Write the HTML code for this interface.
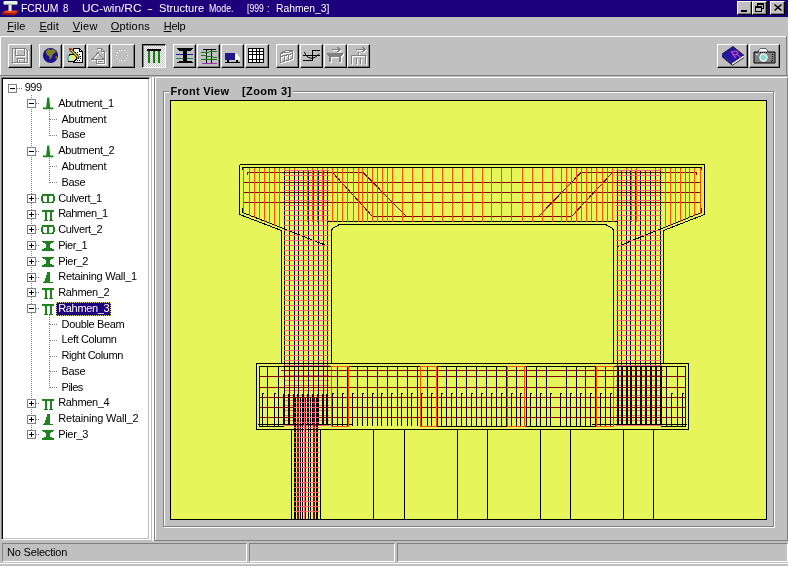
<!DOCTYPE html><html><head><meta charset="utf-8"><title>FCRUM 8</title><style>
*{box-sizing:border-box;margin:0;padding:0}
html,body{width:788px;height:566px;overflow:hidden;background:#c0c0c0;font-family:"Liberation Sans",sans-serif;font-size:11px;color:#000}
#w{position:absolute;left:0;top:0;width:788px;height:566px;overflow:hidden;background:#c0c0c0;will-change:transform}
.abs{position:absolute}
#title{position:absolute;left:0;top:0;width:788px;height:17px;background:#1c007c;color:#fff;font-size:11px;line-height:16px;white-space:pre}
#title span{position:absolute;top:0}
.cap{position:absolute;top:1px;width:15px;height:14px;background:#c0c0c0;border:1px solid;border-color:#fff #000 #000 #fff;box-shadow:inset -1px -1px 0 #808080}
#menu{position:absolute;left:0;top:17px;width:788px;height:19px;background:#c0c0c0;font-size:11px;line-height:18px}
#menu span{position:absolute;top:0}
#menu u{text-decoration:underline;text-underline-offset:1px}
.hl{position:absolute;height:1px;left:0;width:788px}
.tb{position:absolute;top:44px;width:24px;height:24px;background:#c0c0c0;border:1px solid;border-color:#fff #000 #000 #fff;box-shadow:inset -1px -1px 0 #808080}
.tbp{border-color:#000 #fff #fff #000;box-shadow:inset 1px 1px 0 #808080;background-color:#c0c0c0;background-image:linear-gradient(45deg,#fff 25%,transparent 25%,transparent 75%,#fff 75%),linear-gradient(45deg,#fff 25%,transparent 25%,transparent 75%,#fff 75%);background-size:2px 2px;background-position:0 0,1px 1px}
.tb svg{position:absolute;left:0;top:0}
#tree{position:absolute;left:1px;top:77px;width:150px;height:463px;background:#fff;border:1px solid;border-right-width:2px;border-color:#808080 #fff #fff #808080;box-shadow:inset 1px 1px 0 #000, inset -1px -1px 0 #c0c0c0}
.tr{position:absolute;white-space:pre;font-size:11px;line-height:13px;height:13px}
#main{position:absolute;left:154px;top:77px;width:634px;height:464px;background:#c0c0c0;border:1px solid;border-color:#fff #808080 #808080 #808080;box-shadow:inset 1px 0 0 #fff}
#gb{position:absolute;left:163px;top:91px;width:611px;height:436px;border:1px solid #808080;box-shadow:1px 1px 0 #fff, inset 1px 1px 0 #fff}
#gbl{position:absolute;left:169px;top:84px;height:14px;width:124px;background:#c0c0c0;font-weight:bold;font-size:11px;line-height:14px;white-space:pre;letter-spacing:0.1px}
#cv{position:absolute;left:170px;top:100px;width:597px;height:420px;background:#e6f55a;border:1px solid #000}
.sp{position:absolute;top:543px;height:19px;border:1px solid;border-color:#808080 #fff #fff #808080}
</style></head><body><div id="w">
<div id="title">
<span style="left:21px;transform-origin:0 0;transform:scaleX(0.939)">FCRUM </span>
<span style="left:63px;transform-origin:0 0;transform:scaleX(0.883)">8 </span>
<span style="left:81.5px;transform-origin:0 0;transform:scaleX(1.082)">UC-win/RC </span>
<span style="left:147px;transform-origin:0 0;transform:scaleX(1.638)">- </span>
<span style="left:158.8px;transform-origin:0 0;transform:scaleX(1.013)">Structure </span>
<span style="left:208.5px;transform-origin:0 0;transform:scaleX(0.801)">Mode. </span>
<span style="left:246.6px;transform-origin:0 0;transform:scaleX(0.780)">[999 </span>
<span style="left:267.4px;transform-origin:0 0;transform:scaleX(0.851)">: </span>
<span style="left:276px;transform-origin:0 0;transform:scaleX(0.939)">Rahmen_3] </span>
</div>
<svg class="abs" style="left:0;top:0" width="20" height="17" viewBox="0 0 20 17"><polygon points="2,12.500 6,10.500 18,10.500 14,13.500" fill="#f04818"/><polygon points="2,12.500 14,13.500 14,15.500 2,14.500" fill="#a01808"/><polygon points="14,13.500 18,10.500 18,12.500 14,15.500" fill="#c02808"/><rect x="8.500" y="4" width="3.500" height="7" fill="#e0f8e0"/><rect x="11" y="4" width="1" height="7" fill="#88a088"/><rect x="3.500" y="1" width="14" height="3.800" rx="1.200" fill="#e0f4e0"/><rect x="4" y="4" width="13" height="0.800" fill="#90a890"/></svg>
<div class="cap" style="left:737px"><svg width="13" height="12" class="abs" style="left:0;top:0"><rect x="3" y="8" width="6" height="2" fill="#000"/></svg></div>
<div class="cap" style="left:752px"><svg width="13" height="12" class="abs" style="left:0;top:0"><rect x="4.5" y="1.5" width="6" height="5" fill="none" stroke="#000"/><rect x="4" y="1" width="7" height="2" fill="#000"/><rect x="2.5" y="4.5" width="6" height="5" fill="#c0c0c0" stroke="#000"/><rect x="2" y="4" width="7" height="2" fill="#000"/></svg></div>
<div class="cap" style="left:770px"><svg width="13" height="12" class="abs" style="left:0;top:0"><path d="M3.5 2.5 L10.5 8.5 M10.5 2.5 L3.5 8.5" stroke="#000" stroke-width="1.6"/></svg></div>
<div id="menu">
<span style="left:7.2px;letter-spacing:0.14px"><u>F</u>ile</span>
<span style="left:39.4px;letter-spacing:0.11px"><u>E</u>dit</span>
<span style="left:72.8px;letter-spacing:0.34px"><u>V</u>iew</span>
<span style="left:110.8px;letter-spacing:0.16px"><u>O</u>ptions</span>
<span style="left:163.7px;letter-spacing:-0.21px"><u>H</u>elp</span>
</div>
<div class="hl" style="top:36px;background:#fff;width:787px"></div><div class="abs" style="left:786px;top:36px;width:1px;height:40px;background:#808080"></div><div class="abs" style="left:0;top:36px;width:1px;height:40px;background:#fff"></div>
<div class="hl" style="top:75px;background:#808080"></div>
<div class="tb" style="left:8px;width:24px"><svg width="24" height="24" viewBox="0 0 24 24" shape-rendering="crispEdges" style="left:-1px;top:-1px"><g transform="translate(1,1)" stroke="#fff" fill="none"><path d="M4.5 4.5h13l1.5 1.5v12.500h-14.5z"/><path d="M7.500 4.500v7h9v-7"/><path d="M9.500 18.500v-4h7v4"/><path d="M11.500 15.500v2"/></g><g stroke="#808080" fill="none"><path d="M4.5 4.5h13l1.5 1.5v12.500h-14.5z"/><path d="M7.500 4.500v7h9v-7"/><path d="M9.500 18.500v-4h7v4"/><path d="M11.500 15.500v2"/></g></svg></div>
<div class="tb" style="left:39px;width:23px"><svg width="23" height="24" viewBox="0 0 23 24" shape-rendering="crispEdges" style="left:-1px;top:-1px"><circle cx="11.5" cy="11.500" r="7.600" fill="#1c1090" shape-rendering="auto"/><path d="M7 7l3-2 2 1 2-1 3 2-1 2-2 1-1 3-2 3-1-4-2-1-1-2z" fill="#80801c" shape-rendering="auto"/><path d="M16 13l2-1 0 2-1 1z" fill="#80801c" shape-rendering="auto"/></svg></div>
<div class="tb" style="left:63px;width:23px"><svg width="23" height="24" viewBox="0 0 23 24" shape-rendering="crispEdges" style="left:-1px;top:-1px"><path d="M10.500 4.500h6l3 3v11h-9z" fill="#fff" stroke="#000"/><path d="M16.500 4.500v3h3" fill="none" stroke="#000"/><path d="M12 8.500h3M12 10.500h6M15 12.500h3M15 14.500h3M12 16.500h6" stroke="#000" stroke-dasharray="1 1"/><path d="M5.500 11.500l3-1.500h4l1 2v3l-2 2h-6z" fill="#e8e880" stroke="#000"/><rect x="4" y="11" width="2" height="6" fill="#40c0c0"/><path d="M7 5l9 9" stroke="#000" stroke-width="2.600" shape-rendering="auto"/><path d="M7.500 5.500l8 8" stroke="#e8e000" stroke-width="1.200" shape-rendering="auto"/><rect x="6" y="4" width="2" height="2" fill="#e03000"/></svg></div>
<div class="tb" style="left:87px;width:23px"><svg width="23" height="24" viewBox="0 0 23 24" shape-rendering="crispEdges" style="left:-1px;top:-1px"><g transform="translate(1,1)" stroke="#fff" fill="none"><path d="M9.500 4.500h5l3 3v11.500h-8v-3"/><path d="M14.500 4.500v3h3"/><path d="M11 8.500l-5.500 6.500h11z"/><path d="M10.500 17.500h5"/></g><g stroke="#808080" fill="none"><path d="M9.500 4.500h5l3 3v11.500h-8v-3"/><path d="M14.500 4.500v3h3"/><path d="M11 8.500l-5.500 6.500h11z"/><path d="M10.500 17.500h5"/></g></svg></div>
<div class="tb" style="left:111px;width:24px"><svg width="24" height="24" viewBox="0 0 24 24" shape-rendering="crispEdges" style="left:-1px;top:-1px"><rect x="16" y="11" width="1" height="1" fill="#fff"/><rect x="15" y="10" width="1" height="1" fill="#909090" opacity="0.35"/><rect x="15" y="14" width="1" height="1" fill="#fff"/><rect x="14" y="13" width="1" height="1" fill="#909090" opacity="0.35"/><rect x="13" y="16" width="1" height="1" fill="#fff"/><rect x="12" y="15" width="1" height="1" fill="#909090" opacity="0.35"/><rect x="10" y="16" width="1" height="1" fill="#fff"/><rect x="9" y="15" width="1" height="1" fill="#909090" opacity="0.35"/><rect x="8" y="16" width="1" height="1" fill="#fff"/><rect x="7" y="15" width="1" height="1" fill="#909090" opacity="0.35"/><rect x="6" y="14" width="1" height="1" fill="#fff"/><rect x="5" y="13" width="1" height="1" fill="#909090" opacity="0.35"/><rect x="5" y="11" width="1" height="1" fill="#fff"/><rect x="4" y="10" width="1" height="1" fill="#909090" opacity="0.35"/><rect x="6" y="8" width="1" height="1" fill="#fff"/><rect x="5" y="7" width="1" height="1" fill="#909090" opacity="0.35"/><rect x="8" y="6" width="1" height="1" fill="#fff"/><rect x="7" y="5" width="1" height="1" fill="#909090" opacity="0.35"/><rect x="10" y="6" width="1" height="1" fill="#fff"/><rect x="9" y="5" width="1" height="1" fill="#909090" opacity="0.35"/><rect x="13" y="6" width="1" height="1" fill="#fff"/><rect x="12" y="5" width="1" height="1" fill="#909090" opacity="0.35"/><rect x="15" y="8" width="1" height="1" fill="#fff"/><rect x="14" y="7" width="1" height="1" fill="#909090" opacity="0.35"/></svg></div>
<div class="tb tbp" style="left:142px;width:24px"><svg width="24" height="24" viewBox="0 0 24 24" shape-rendering="crispEdges" style="left:-1px;top:-1px"><rect x="5" y="5" width="14" height="2" fill="#000"/><rect x="6" y="7" width="2" height="12" fill="#108010"/><rect x="11" y="7" width="2" height="12" fill="#108010"/><rect x="16" y="7" width="2" height="12" fill="#108010"/></svg></div>
<div class="tb" style="left:173px;width:23px"><svg width="23" height="24" viewBox="0 0 23 24" shape-rendering="crispEdges" style="left:-1px;top:-1px"><g transform="translate(-1,0)"><path d="M5 4h16v1l-3 2h-10l-3-2z" fill="#000"/><rect x="11" y="5" width="4" height="13" fill="#000"/><path d="M5 19h16v-1l-3-1h-10l-3 1z" fill="#000"/><rect x="4" y="10" width="7" height="1" fill="#2018a0"/><rect x="15" y="10" width="6" height="1" fill="#2018a0"/><rect x="4" y="14" width="7" height="1" fill="#108070"/><rect x="15" y="14" width="6" height="1" fill="#108070"/></g></svg></div>
<div class="tb" style="left:197px;width:23px"><svg width="23" height="24" viewBox="0 0 23 24" shape-rendering="crispEdges" style="left:-1px;top:-1px"><rect x="6" y="5" width="13" height="1" fill="#000"/><rect x="9" y="5" width="1" height="14" fill="#000"/><rect x="14" y="5" width="1" height="14" fill="#000"/><path d="M4 8.500h7l2-1h7M4 11.500h4l2 1h5l2 1h3M4 15.500h16" stroke="#108010" fill="none" shape-rendering="auto"/><rect x="5" y="19" width="15" height="1" fill="#a030b0"/></svg></div>
<div class="tb" style="left:221px;width:23px"><svg width="23" height="24" viewBox="0 0 23 24" shape-rendering="crispEdges" style="left:-1px;top:-1px"><rect x="4" y="9" width="10" height="7" fill="#201890"/><path d="M14 10h2.500l2 3v3h-4.500z" fill="#fff"/><rect x="4" y="18" width="15" height="1" fill="#000"/><rect x="6" y="16" width="2" height="2" fill="#000"/><rect x="15" y="16" width="2" height="2" fill="#000"/></svg></div>
<div class="tb" style="left:245px;width:24px"><svg width="24" height="24" viewBox="0 0 24 24" shape-rendering="crispEdges" style="left:-1px;top:-1px"><rect x="3" y="4" width="16" height="15" fill="#000"/><rect x="4.0" y="5.0" width="2.8" height="2" fill="#fff"/><rect x="7.8" y="5.0" width="2.8" height="2" fill="#fff"/><rect x="11.6" y="5.0" width="2.8" height="2" fill="#fff"/><rect x="15.399999999999999" y="5.0" width="2.8" height="2" fill="#fff"/><rect x="4.0" y="7.8" width="2.8" height="2" fill="#fff"/><rect x="7.8" y="7.8" width="2.8" height="2" fill="#fff"/><rect x="11.6" y="7.8" width="2.8" height="2" fill="#fff"/><rect x="15.399999999999999" y="7.8" width="2.8" height="2" fill="#fff"/><rect x="4.0" y="10.6" width="2.8" height="2" fill="#fff"/><rect x="7.8" y="10.6" width="2.8" height="2" fill="#fff"/><rect x="11.6" y="10.6" width="2.8" height="2" fill="#fff"/><rect x="15.399999999999999" y="10.6" width="2.8" height="2" fill="#fff"/><rect x="4.0" y="13.399999999999999" width="2.8" height="2" fill="#fff"/><rect x="7.8" y="13.399999999999999" width="2.8" height="2" fill="#fff"/><rect x="11.6" y="13.399999999999999" width="2.8" height="2" fill="#fff"/><rect x="15.399999999999999" y="13.399999999999999" width="2.8" height="2" fill="#fff"/><rect x="4.0" y="16.2" width="2.8" height="2" fill="#fff"/><rect x="7.8" y="16.2" width="2.8" height="2" fill="#fff"/><rect x="11.6" y="16.2" width="2.8" height="2" fill="#fff"/><rect x="15.399999999999999" y="16.2" width="2.8" height="2" fill="#fff"/></svg></div>
<div class="tb" style="left:276px;width:23px"><svg width="23" height="24" viewBox="0 0 23 24" shape-rendering="crispEdges" style="left:-1px;top:-1px"><g transform="translate(1,1)" stroke="#fff" fill="none"><path d="M4.500 9.500c3-3 9-4 13-3M4.500 9.500v9l12-4v-7.500M4.500 12.500l12-3M8.500 11.500v6M12.500 10.500v6M16.500 7.500l-12 2"/></g><g stroke="#808080" fill="none"><path d="M4.500 9.500c3-3 9-4 13-3M4.500 9.500v9l12-4v-7.500M4.500 12.500l12-3M8.500 11.500v6M12.500 10.500v6M16.500 7.500l-12 2"/></g></svg></div>
<div class="tb" style="left:300px;width:23px"><svg width="23" height="24" viewBox="0 0 23 24" shape-rendering="crispEdges" style="left:-1px;top:-1px"><path d="M3 11.500h17M12.500 6v11M12.500 6.500h7M3 16.500h10" stroke="#000" fill="none"/><path d="M4.500 8c2 7.500 10 8.500 14.500 1.500" stroke="#000" fill="none" shape-rendering="auto"/></svg></div>
<div class="tb" style="left:324px;width:23px"><svg width="23" height="24" viewBox="0 0 23 24" shape-rendering="crispEdges" style="left:-1px;top:-1px"><g transform="translate(1,1)"><path d="M3 9h16v2l-2 1v6h-2v-5h-8v5h-2v-6l-2-1z" fill="#fff"/></g><path d="M3 9h16v2l-2 1v6h-2v-5h-8v5h-2v-6l-2-1z" fill="#808080"/><g transform="translate(1,1)" stroke="#fff" fill="none"><path d="M8 5.500h8M13.500 3l2.500 2.500-2.500 2.500"/></g><g stroke="#808080" fill="none"><path d="M8 5.500h8M13.500 3l2.500 2.500-2.500 2.500"/></g></svg></div>
<div class="tb" style="left:347px;width:23px"><svg width="23" height="24" viewBox="0 0 23 24" shape-rendering="crispEdges" style="left:-1px;top:-1px"><g transform="translate(1,1)" stroke="#fff" fill="none"><path d="M9 5.500h9M15.500 3l2.500 2.500-2.500 2.500M4.500 20v-9h14v9M9.500 20v-6M13.500 20v-6M11.500 11v-3"/></g><g stroke="#808080" fill="none"><path d="M9 5.500h9M15.500 3l2.500 2.500-2.500 2.500M4.500 20v-9h14v9M9.500 20v-6M13.500 20v-6M11.500 11v-3"/></g></svg></div>
<div class="tb" style="left:717px;width:31px"><svg width="31" height="24" viewBox="0 0 31 24" shape-rendering="crispEdges" style="left:-1px;top:-1px"><path d="M5 10l11-7.500 11 9-12 8z" fill="#2418a0" shape-rendering="auto"/><path d="M5 10v3l10 8.500v-2z" fill="#181070" shape-rendering="auto"/><path d="M15 19.500l12-8v2l-12 8z" fill="#fff" shape-rendering="auto"/><path d="M15 21.500l12-8" stroke="#000" stroke-width="0.8" shape-rendering="auto"/><path d="M5 10l11-7.500 11 9" stroke="#000" stroke-width="0.7" fill="none" shape-rendering="auto"/><text x="11" y="15" font-family="Liberation Sans,sans-serif" font-size="11" font-weight="bold" fill="#c040c0" transform="rotate(-12 14 12) skewX(20)">R</text></svg></div>
<div class="tb" style="left:749px;width:31px"><svg width="31" height="24" viewBox="0 0 31 24" shape-rendering="crispEdges" style="left:-1px;top:-1px"><path d="M5 8h4l2-3h6l2 3h7v11h-21z" fill="#808080" stroke="#000" stroke-width="1" shape-rendering="auto"/><path d="M11 5h6l1.500 2.500h-9z" fill="#fff" shape-rendering="auto"/><circle cx="14.5" cy="13.500" r="4.200" fill="#fff" shape-rendering="auto"/><circle cx="14.500" cy="13.500" r="3" fill="#80e0d0" shape-rendering="auto"/><path d="M23.500 10v8" stroke="#000" stroke-dasharray="1 1"/><rect x="7" y="10" width="2" height="1" fill="#fff"/><path d="M21 18l2-2v2z" fill="#000"/><path d="M11 8.500h7" stroke="#000" stroke-dasharray="1 1"/></svg></div>
<div id="tree"></div>
<svg class="abs" style="left:0;top:0" width="150" height="540" shape-rendering="crispEdges"><path d="M31.500 95V434" stroke="#808080" stroke-width="1" stroke-dasharray="1 1"/><path d="M17 88.5H23" stroke="#808080" stroke-width="1" stroke-dasharray="1 1"/><rect x="8.5" y="84.5" width="8" height="8" fill="#fff" stroke="#808080"/><path d="M10 88.5h5" stroke="#000"/><path d="M36 103.5H40" stroke="#808080" stroke-width="1" stroke-dasharray="1 1"/><path d="M47.2 97.5h2l1 10h3.200v1.800h-10.400v-1.800h3.200z" fill="#1e821e" shape-rendering="auto"/><rect x="27.5" y="99.5" width="8" height="8" fill="#fff" stroke="#808080"/><path d="M29 103.5h5" stroke="#000"/><path d="M50 119.5H57" stroke="#808080" stroke-width="1" stroke-dasharray="1 1"/><path d="M49.500 110V120" stroke="#808080" stroke-width="1" stroke-dasharray="1 1"/><path d="M50 135.5H57" stroke="#808080" stroke-width="1" stroke-dasharray="1 1"/><path d="M49.500 119V136" stroke="#808080" stroke-width="1" stroke-dasharray="1 1"/><path d="M36 151.5H40" stroke="#808080" stroke-width="1" stroke-dasharray="1 1"/><path d="M47.2 145.5h2l1 10h3.200v1.800h-10.400v-1.800h3.200z" fill="#1e821e" shape-rendering="auto"/><rect x="27.5" y="147.5" width="8" height="8" fill="#fff" stroke="#808080"/><path d="M29 151.5h5" stroke="#000"/><path d="M50 166.5H57" stroke="#808080" stroke-width="1" stroke-dasharray="1 1"/><path d="M49.500 158V167" stroke="#808080" stroke-width="1" stroke-dasharray="1 1"/><path d="M50 182.5H57" stroke="#808080" stroke-width="1" stroke-dasharray="1 1"/><path d="M49.500 166V183" stroke="#808080" stroke-width="1" stroke-dasharray="1 1"/><path d="M36 198.5H40" stroke="#808080" stroke-width="1" stroke-dasharray="1 1"/><rect x="42.2" y="194.8" width="11.500" height="7.500" rx="1.500" fill="none" stroke="#1e821e" stroke-width="1.600"/><path d="M48 194.8v7.500" stroke="#1e821e" stroke-width="1.600"/><rect x="27.5" y="194.5" width="8" height="8" fill="#fff" stroke="#808080"/><path d="M29 198.5h5" stroke="#000"/><path d="M31.5 196v5" stroke="#000"/><path d="M36 214.5H40" stroke="#808080" stroke-width="1" stroke-dasharray="1 1"/><path d="M42 209.5h12v2h-12zM45 211.5h1.600v8h1v1.500h-3.600v-1.500h1zM50 211.5h1.600v8h1v1.500h-3.600v-1.500h1z" fill="#1e821e"/><rect x="27.5" y="210.5" width="8" height="8" fill="#fff" stroke="#808080"/><path d="M29 214.5h5" stroke="#000"/><path d="M31.5 212v5" stroke="#000"/><path d="M36 229.5H40" stroke="#808080" stroke-width="1" stroke-dasharray="1 1"/><rect x="42.2" y="225.8" width="11.500" height="7.500" rx="1.500" fill="none" stroke="#1e821e" stroke-width="1.600"/><path d="M48 225.8v7.500" stroke="#1e821e" stroke-width="1.600"/><rect x="27.5" y="225.5" width="8" height="8" fill="#fff" stroke="#808080"/><path d="M29 229.5h5" stroke="#000"/><path d="M31.5 227v5" stroke="#000"/><path d="M36 245.5H40" stroke="#808080" stroke-width="1" stroke-dasharray="1 1"/><path d="M42.3 240.5h11.500v1.500l-4 2v3.500l4 1.500v1.500h-11.500v-1.500l4-1.500v-3.500l-4-2z" fill="#1e821e"/><rect x="27.5" y="241.5" width="8" height="8" fill="#fff" stroke="#808080"/><path d="M29 245.5h5" stroke="#000"/><path d="M31.5 243v5" stroke="#000"/><path d="M36 261.5H40" stroke="#808080" stroke-width="1" stroke-dasharray="1 1"/><path d="M42.3 256.5h11.500v1.500l-4 2v3.500l4 1.500v1.500h-11.500v-1.500l4-1.500v-3.500l-4-2z" fill="#1e821e"/><rect x="27.5" y="257.5" width="8" height="8" fill="#fff" stroke="#808080"/><path d="M29 261.5h5" stroke="#000"/><path d="M31.5 259v5" stroke="#000"/><path d="M36 277.5H40" stroke="#808080" stroke-width="1" stroke-dasharray="1 1"/><path d="M47.5 272.0h2.500v9.500h2.500v1.500h-9.500v-1.500h1.500z" fill="#1e821e"/><rect x="27.5" y="273.5" width="8" height="8" fill="#fff" stroke="#808080"/><path d="M29 277.5h5" stroke="#000"/><path d="M31.5 275v5" stroke="#000"/><path d="M36 292.5H40" stroke="#808080" stroke-width="1" stroke-dasharray="1 1"/><path d="M42 287.5h12v2h-12zM45 289.5h1.600v8h1v1.500h-3.600v-1.500h1zM50 289.5h1.600v8h1v1.500h-3.600v-1.500h1z" fill="#1e821e"/><rect x="27.5" y="288.5" width="8" height="8" fill="#fff" stroke="#808080"/><path d="M29 292.5h5" stroke="#000"/><path d="M31.5 290v5" stroke="#000"/><path d="M36 308.5H40" stroke="#808080" stroke-width="1" stroke-dasharray="1 1"/><path d="M42 303.5h12v2h-12zM45 305.5h1.600v8h1v1.500h-3.600v-1.500h1zM50 305.5h1.600v8h1v1.500h-3.600v-1.500h1z" fill="#1e821e"/><rect x="27.5" y="304.5" width="8" height="8" fill="#fff" stroke="#808080"/><path d="M29 308.5h5" stroke="#000"/><path d="M50 324.5H57" stroke="#808080" stroke-width="1" stroke-dasharray="1 1"/><path d="M49.500 315V325" stroke="#808080" stroke-width="1" stroke-dasharray="1 1"/><path d="M50 340.5H57" stroke="#808080" stroke-width="1" stroke-dasharray="1 1"/><path d="M49.500 324V341" stroke="#808080" stroke-width="1" stroke-dasharray="1 1"/><path d="M50 356.5H57" stroke="#808080" stroke-width="1" stroke-dasharray="1 1"/><path d="M49.500 340V357" stroke="#808080" stroke-width="1" stroke-dasharray="1 1"/><path d="M50 371.5H57" stroke="#808080" stroke-width="1" stroke-dasharray="1 1"/><path d="M49.500 356V372" stroke="#808080" stroke-width="1" stroke-dasharray="1 1"/><path d="M50 387.5H57" stroke="#808080" stroke-width="1" stroke-dasharray="1 1"/><path d="M49.500 371V388" stroke="#808080" stroke-width="1" stroke-dasharray="1 1"/><path d="M36 403.5H40" stroke="#808080" stroke-width="1" stroke-dasharray="1 1"/><path d="M42 398.5h12v2h-12zM45 400.5h1.600v8h1v1.500h-3.600v-1.500h1zM50 400.5h1.600v8h1v1.500h-3.600v-1.500h1z" fill="#1e821e"/><rect x="27.5" y="399.5" width="8" height="8" fill="#fff" stroke="#808080"/><path d="M29 403.5h5" stroke="#000"/><path d="M31.5 401v5" stroke="#000"/><path d="M36 419.5H40" stroke="#808080" stroke-width="1" stroke-dasharray="1 1"/><path d="M47.5 414.0h2.500v9.500h2.500v1.500h-9.500v-1.500h1.500z" fill="#1e821e"/><rect x="27.5" y="415.5" width="8" height="8" fill="#fff" stroke="#808080"/><path d="M29 419.5h5" stroke="#000"/><path d="M31.5 417v5" stroke="#000"/><path d="M36 434.5H40" stroke="#808080" stroke-width="1" stroke-dasharray="1 1"/><path d="M42.3 429.5h11.500v1.500l-4 2v3.500l4 1.500v1.500h-11.500v-1.500l4-1.500v-3.500l-4-2z" fill="#1e821e"/><rect x="27.5" y="430.5" width="8" height="8" fill="#fff" stroke="#808080"/><path d="M29 434.5h5" stroke="#000"/><path d="M31.5 432v5" stroke="#000"/></svg><div class="tr" style="left:24.7px;top:81px;letter-spacing:-0.45px">999</div><div class="tr" style="left:58.2px;top:97px;letter-spacing:-0.39px">Abutment_1</div><div class="tr" style="left:61.6px;top:113px;letter-spacing:-0.32px">Abutment</div><div class="tr" style="left:61.6px;top:128px;letter-spacing:-0.34px">Base</div><div class="tr" style="left:58.2px;top:144px;letter-spacing:-0.31px">Abutment_2</div><div class="tr" style="left:61.6px;top:160px;letter-spacing:-0.32px">Abutment</div><div class="tr" style="left:61.6px;top:176px;letter-spacing:-0.34px">Base</div><div class="tr" style="left:58.2px;top:192px;letter-spacing:-0.40px">Culvert_1</div><div class="tr" style="left:58.2px;top:207px;letter-spacing:-0.54px">Rahmen_1</div><div class="tr" style="left:58.2px;top:223px;letter-spacing:-0.32px">Culvert_2</div><div class="tr" style="left:58.2px;top:239px;letter-spacing:-0.47px">Pier_1</div><div class="tr" style="left:58.2px;top:255px;letter-spacing:-0.30px">Pier_2</div><div class="tr" style="left:58.2px;top:270px;letter-spacing:-0.25px">Retaining Wall_1</div><div class="tr" style="left:58.2px;top:286px;letter-spacing:-0.33px">Rahmen_2</div><div class="abs" style="left:56px;top:302px;width:55px;height:14px;background:#1c007c;outline:1px dotted #e0e060;outline-offset:-1px"></div><div class="tr" style="left:58.2px;top:302px;letter-spacing:-0.33px;color:#fff">Rahmen_3</div><div class="tr" style="left:61.6px;top:318px;letter-spacing:-0.37px">Double Beam</div><div class="tr" style="left:61.6px;top:333px;letter-spacing:-0.41px">Left Column</div><div class="tr" style="left:61.6px;top:349px;letter-spacing:-0.45px">Right Column</div><div class="tr" style="left:61.6px;top:365px;letter-spacing:-0.34px">Base</div><div class="tr" style="left:61.6px;top:381px;letter-spacing:-0.53px">Piles</div><div class="tr" style="left:58.2px;top:396px;letter-spacing:-0.33px">Rahmen_4</div><div class="tr" style="left:58.2px;top:412px;letter-spacing:-0.16px">Retaining Wall_2</div><div class="tr" style="left:58.2px;top:428px;letter-spacing:-0.30px">Pier_3</div>
<div class="abs" style="left:152px;top:77px;width:2px;height:464px;background:#fff"></div>
<div id="main"></div><div id="gb"></div><div id="gbl"></div><div class="abs" style="left:170.5px;top:84px;font-weight:bold;font-size:11px;line-height:14px;white-space:pre;letter-spacing:0.28px">Front View </div><div class="abs" style="left:242px;top:84px;font-weight:bold;font-size:11px;line-height:14px;white-space:pre;letter-spacing:0.38px">[Zoom 3] </div><div id="cv"></div>
<svg class="abs" style="left:171px;top:101px" width="595" height="418" viewBox="171 101 595 418"><path d="M239.500 164.500H704.500V214.500L663.500 230.500V363.500M613.500 363.500V230.500L612.500 228.500L605.500 224.500H339.500L332.500 228.500L331.500 230.500V363.500M281.500 363.500V230.500L239.500 214.500V164.500M242.500 170V167.500H701.500V170M242.500 208V213M701.500 208V213M242.500 212.500L327.500 246M701.500 212.500L617.500 246.500M328 221.500H617M256.500 363.500H688.500V429.500H256.500ZM259.500 426.500V366.500H685.500V426.500M258 424.500H353M259 426.500H284M437 426.500H597M592 424.500H687M661 426.500H686M506.500 366V426M291.5 430V520M320.5 430V520M373.5 430V520M404.5 430V520M457.5 430V520M487.5 430V520M540.5 430V520M570.5 430V520M623.5 430V520M653.5 430V520" stroke="#000" stroke-width="1" fill="none" shape-rendering="crispEdges"/><path d="M337.5 366V426M347.5 366V426M357.5 366V426M367.5 366V426M377.5 366V426M387.5 366V426M397.5 366V426M407.5 366V426M417.5 366V426M427.5 366V426M437.5 366V426M446.5 366V426M456.5 366V426M466.5 366V426M476.5 366V426M486.5 366V426M496.5 366V426M506.5 366V426M516.5 366V426M526.5 366V426M536.5 366V426M546.5 366V426M566.5 366V426M576.5 366V426M585.5 366V426M595.5 366V426M605.5 366V426M332.5 394V426M332 393.500h2M342.5 394V426M342 393.500h2M352.5 394V426M352 393.500h2M362.5 394V426M362 393.500h2M372.5 394V426M372 393.500h2M381.5 394V426M381 393.500h2M391.5 394V426M391 393.500h2M401.5 394V426M401 393.500h2M411.5 394V426M411 393.500h2M421.5 394V426M421 393.500h2M431.5 394V426M431 393.500h2M441.5 394V426M441 393.500h2M451.5 394V426M451 393.500h2M461.5 394V426M461 393.500h2M471.5 394V426M471 393.500h2M481.5 394V426M481 393.500h2M491.5 394V426M491 393.500h2M501.5 394V426M501 393.500h2M511.5 394V426M511 393.500h2M520.5 394V426M520 393.500h2M530.5 394V426M530 393.500h2M540.5 394V426M540 393.500h2M550.5 394V426M550 393.500h2M560.5 394V426M560 393.500h2M570.5 394V426M570 393.500h2M580.5 394V426M580 393.500h2M590.5 394V426M590 393.500h2M600.5 394V426M600 393.500h2M610.5 394V426M610 393.500h2M267.5 366V426M278.5 366V426M666.5 366V426M677.5 366V426M262.5 394V426M262 393.500h2M274.5 394V426M274 393.500h2M671.5 394V426M671 393.500h2M682.5 394V426M682 393.500h2" stroke="#000" stroke-width="1" fill="none" shape-rendering="crispEdges"/><path d="M247.500 175V172.500H363L406.500 216.500M332.500 172.500L372.500 216.500H571.500L612.500 172.500M538.500 216.500L581 172.500H696.500V175M243 182.5H701M243 192.5H701M243 202.5H701M281 370.5H663M260 376.5H686M260 387.5H686M260 397.5H686M260 407.5H686M260 417.5H686" stroke="#800000" stroke-width="1" fill="none" shape-rendering="crispEdges"/><path d="M243.5 168V214M249.5 168V216M254.5 168V218M259.5 168V220M264.5 168V222M269.5 168V224M274.5 168V226M279.5 168V228M284.5 168V222M289.5 168V222M294.5 168V222M307.5 168V222M312.5 168V222M317.5 168V222M322.5 168V222M327.5 168V222M332.5 168V222M337.5 168V222M342.5 168V222M347.5 168V222M353.5 168V222M358.5 168V222M362.5 168V222M367.5 168V222M372.5 168V222M377.5 168V222M382.5 168V222M387.5 168V222M392.5 168V222M402.5 168V222M412.5 168V222M422.5 168V222M432.5 168V222M442.5 168V222M452.5 168V222M462.5 168V222M472.5 168V222M482.5 168V222M491.5 168V222M501.5 168V222M511.5 168V222M522.5 168V222M532.5 168V222M542.5 168V222M552.5 168V222M561.5 168V222M566.5 168V222M571.5 168V222M576.5 168V222M581.5 168V222M586.5 168V222M591.5 168V222M596.5 168V222M602.5 168V222M607.5 168V222M612.5 168V222M617.5 168V222M626.5 168V222M631.5 168V222M636.5 168V222M655.5 168V222M660.5 168V230M665.5 168V228M670.5 168V226M675.5 168V224M680.5 168V222M685.5 168V220M689.5 168V218M694.5 168V216M700.5 168V214M331.5 366.500H348.5V426.500H331.5ZM420.5 366.500H436.5V426.500H420.5ZM507.5 366.500H524.5V426.500H507.5ZM596.5 366.500H613.5V426.500H596.5Z" stroke="#ff5000" stroke-width="1" fill="none" shape-rendering="crispEdges"/><path d="M284.5 171V366M289.5 171V366M294.5 171V366M298.5 171V366M303.5 171V366M308.5 171V366M313.5 171V366M318.5 171V366M323.5 171V366M327.5 171V366M617.5 171V366M621.5 171V366M626.5 171V366M630.5 171V366M635.5 171V366M640.5 171V366M645.5 171V366M650.5 171V366M655.5 171V366M660.5 171V366" stroke="#000" stroke-width="1" fill="none" shape-rendering="crispEdges"/><path d="M284 170.5H329M616 170.5H662M284 175.5H329M616 175.5H662M284 180.5H329M616 180.5H662M284 185.5H329M616 185.5H662M284 190.5H329M616 190.5H662M284 195.5H329M616 195.5H662M284 200.5H329M616 200.5H662M284 205.5H329M616 205.5H662M284 210.5H329M616 210.5H662M284 215.5H329M616 215.5H662M284 220.5H329M616 220.5H662M284 225.5H329M616 225.5H662M284 230.5H329M616 230.5H662M284 235.5H329M616 235.5H662M284 240.5H329M616 240.5H662M284 245.5H329M616 245.5H662M284 250.5H329M616 250.5H662M284 255.5H329M616 255.5H662M284 260.5H329M616 260.5H662M284 265.5H329M616 265.5H662M284 270.5H329M616 270.5H662M284 275.5H329M616 275.5H662M284 280.5H329M616 280.5H662M284 285.5H329M616 285.5H662M284 290.5H329M616 290.5H662M284 295.5H329M616 295.5H662M284 300.5H329M616 300.5H662M284 305.5H329M616 305.5H662M284 310.5H329M616 310.5H662M284 315.5H329M616 315.5H662M284 320.5H329M616 320.5H662M284 325.5H329M616 325.5H662M284 330.5H329M616 330.5H662M284 335.5H329M616 335.5H662M284 340.5H329M616 340.5H662M284 345.5H329M616 345.5H662M284 350.5H329M616 350.5H662M284 355.5H329M616 355.5H662M284 360.5H329M616 360.5H662M284 365.5H329M616 365.5H662M284 370.5H329M616 370.5H662M284 375.5H329M616 375.5H662M284 380.5H329M616 380.5H662M284 385.5H329M616 385.5H662M284 390.5H329M616 390.5H662M284 395.5H329M616 395.5H662M284 400.5H329M616 400.5H662M284 405.5H329M616 405.5H662M284 410.5H329M616 410.5H662M284 415.5H329M616 415.5H662M284 420.5H329M616 420.5H662M284 425.5H329M616 425.5H662" stroke="#ff6478" stroke-width="1" fill="none" shape-rendering="crispEdges"/><path d="M284.5 366V424M289.5 366V424M294.5 366V424M298.5 366V424M303.5 366V424M308.5 366V424M313.5 366V424M318.5 366V424M323.5 366V424M327.5 366V424M617.5 366V424M621.5 366V424M626.5 366V424M630.5 366V424M635.5 366V424M640.5 366V424M645.5 366V424M650.5 366V424M655.5 366V424M660.5 366V424M283.5 394V425M288.5 394V425M293.5 394V425M297.5 394V425M302.5 394V425M307.5 394V425M312.5 394V425M317.5 394V425M322.5 394V425M326.5 394V425M618.5 366V425M622.5 366V425M627.5 366V425M631.5 366V425M636.5 366V425M641.5 366V425M646.5 366V425M651.5 366V425M656.5 366V425M661.5 366V425" stroke="#000" stroke-width="1" fill="none" shape-rendering="crispEdges"/><path d="M282 376.5H332M613 376.5H664M282 387.5H332M613 387.5H664M282 397.5H332M613 397.5H664M282 407.5H332M613 407.5H664M282 417.5H332M613 417.5H664M282 370.5H332M613 370.5H663" stroke="#800000" stroke-width="1" fill="none" shape-rendering="crispEdges"/><path d="M295 398V520M317 398V520" stroke="#000" stroke-width="2" fill="none" shape-rendering="crispEdges"/><path d="M300.5 398V520M302.5 398V520M305.5 398V520M308.5 398V520M310.5 398V520" stroke="#000" stroke-width="1" fill="none" shape-rendering="crispEdges"/><path d="M298 398V520M314 398V520" stroke="#800000" stroke-width="2" fill="none" shape-rendering="crispEdges"/><path d="M304.5 398V520" stroke="#ff6478" stroke-width="1" fill="none" shape-rendering="crispEdges"/><path d="M294 402.5H319M294 407.5H319M294 412.5H319M294 417.5H319M294 422.5H319M294 427.5H319M294 432.5H319M294 437.5H319M294 442.5H319M294 447.5H319M294 452.5H319M294 457.5H319M294 462.5H319M294 467.5H319M294 472.5H319M294 477.5H319M294 482.5H319M294 487.5H319M294 492.5H319M294 496.5H319M294 501.5H319M294 506.5H319M294 511.5H319" stroke="#ff6478" stroke-width="1" fill="none" shape-rendering="crispEdges"/></svg>
<div class="sp" style="left:2px;width:245px"></div><div class="sp" style="left:249px;width:146px"></div><div class="sp" style="left:397px;width:391px"></div>
<div class="abs" style="left:7px;top:546px;font-size:11px;line-height:13px;height:11px;overflow:hidden;letter-spacing:-0.18px">No Selection</div>
<div class="hl" style="top:563px;background:#fff"></div>
</div></body></html>
